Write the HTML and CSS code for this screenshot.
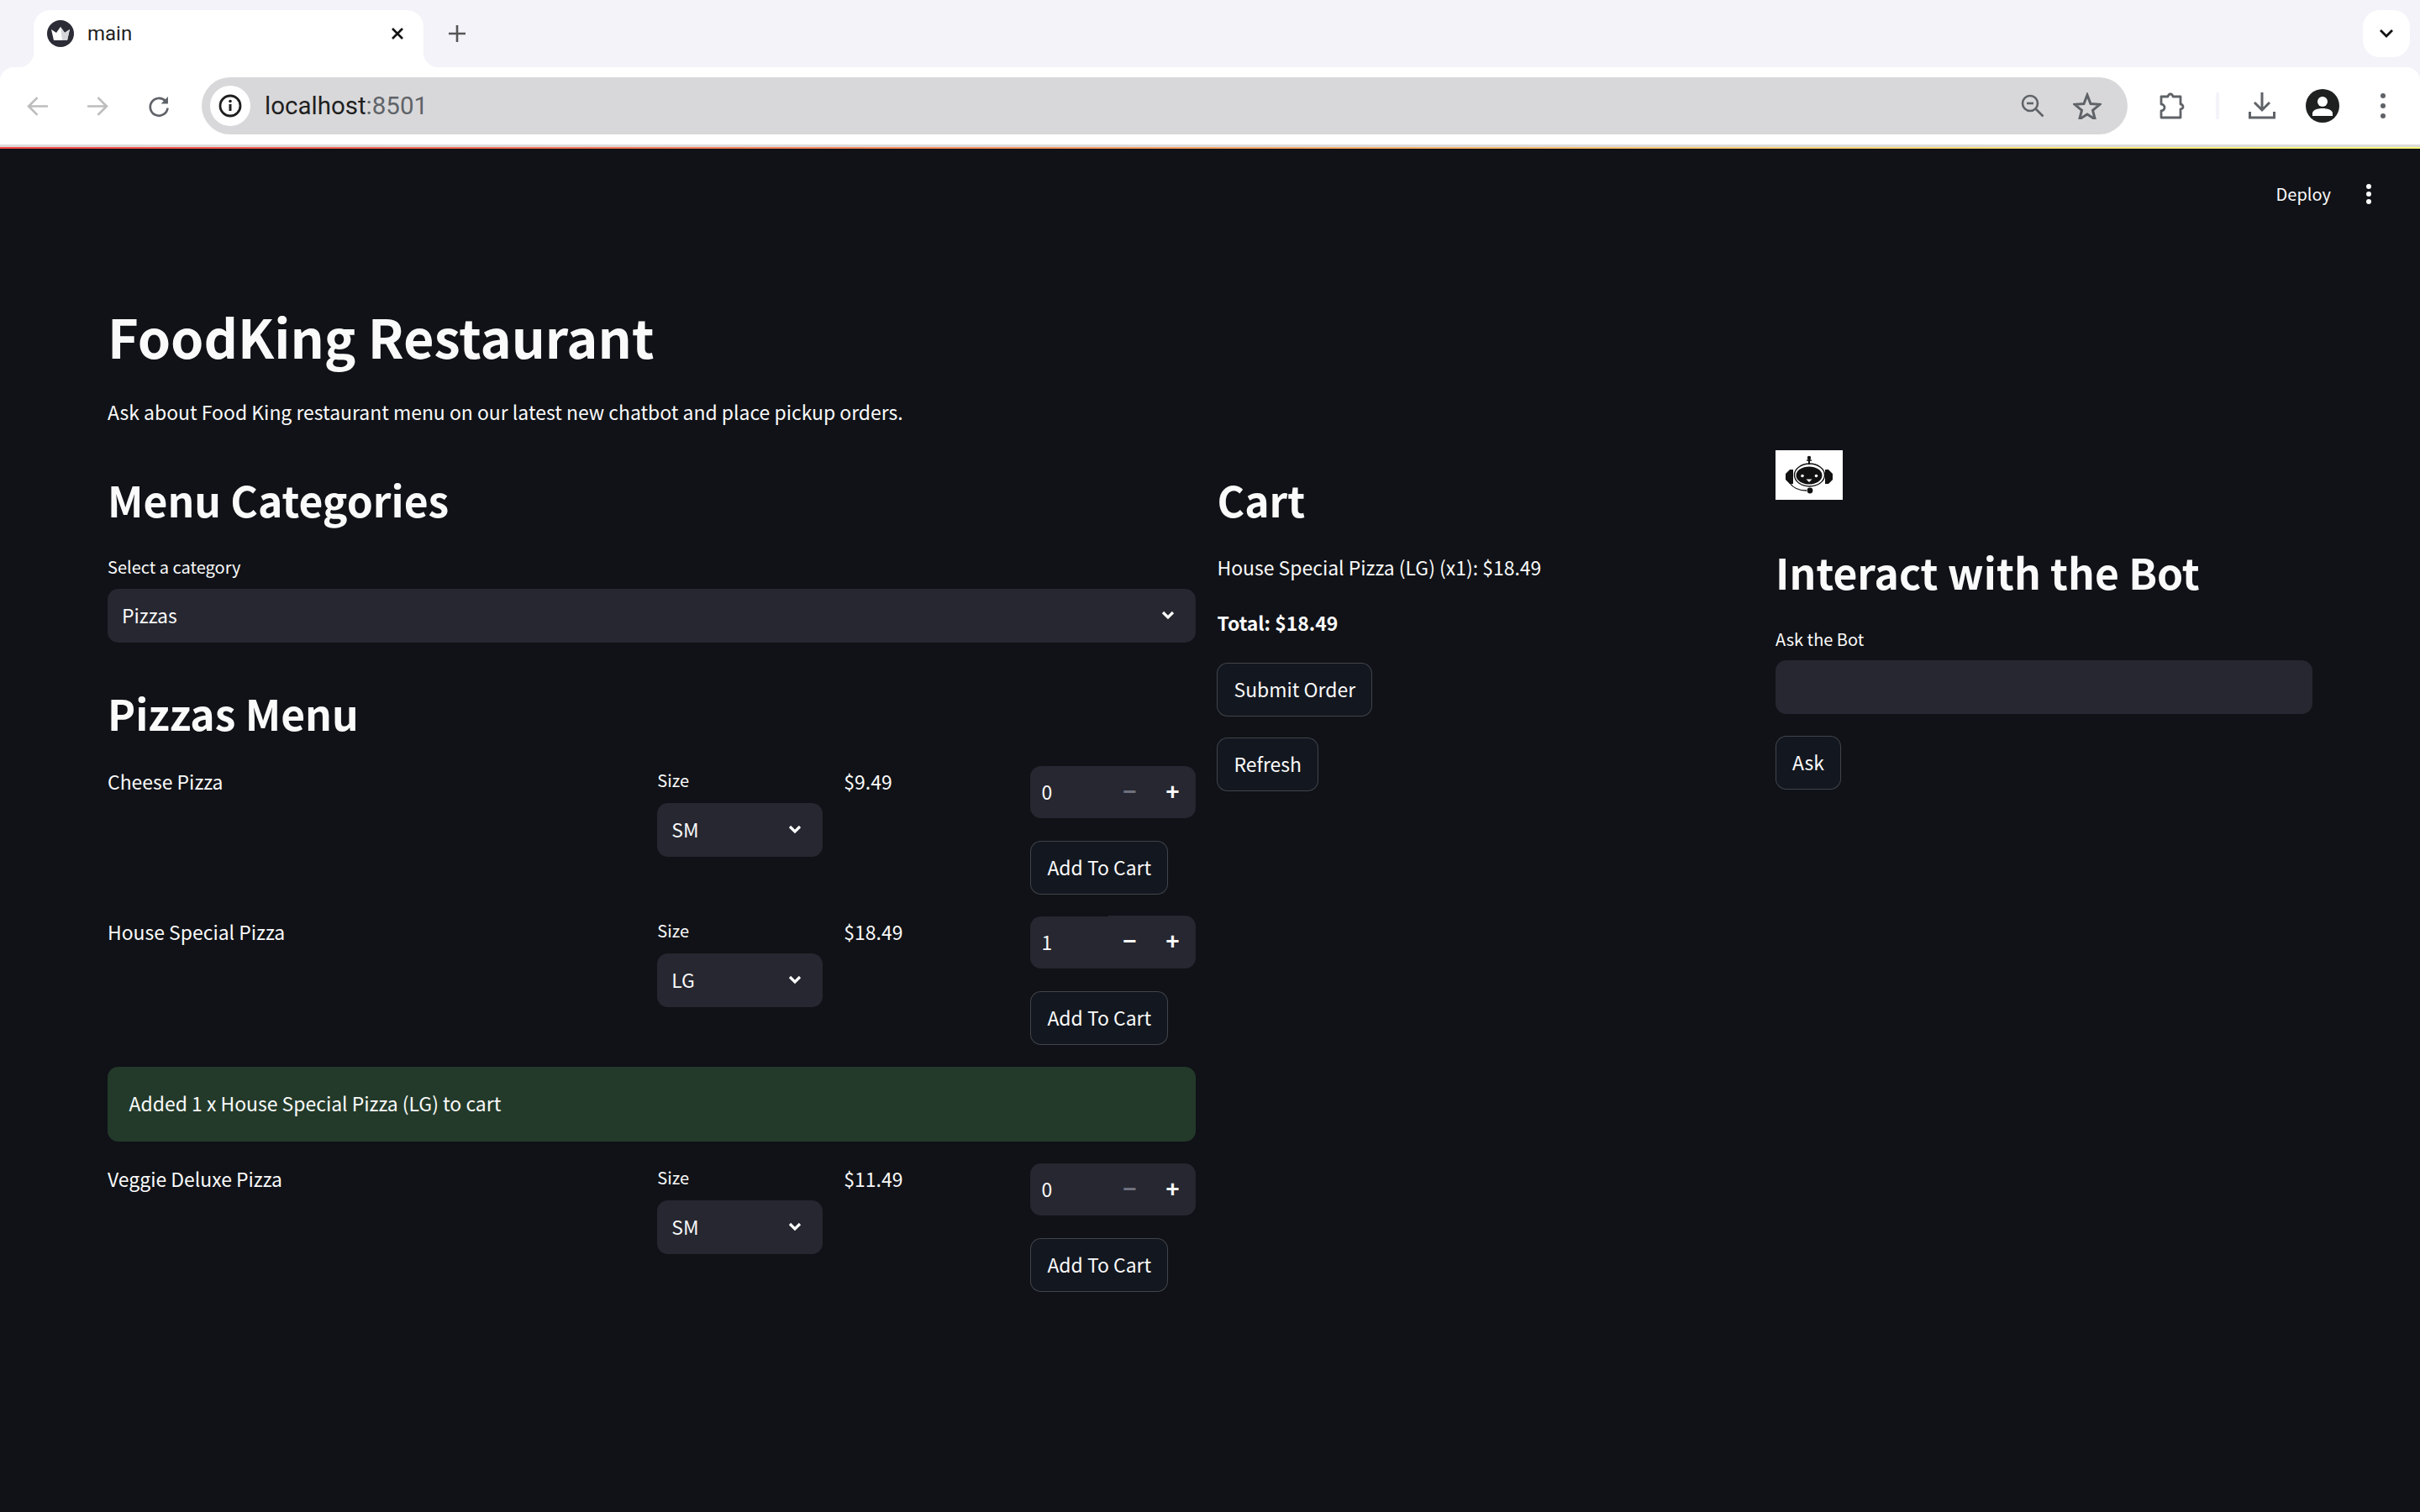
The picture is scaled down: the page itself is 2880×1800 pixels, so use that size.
FILE: index.html
```html
<!DOCTYPE html>
<html lang="en">
<head>
<meta charset="utf-8">
<title>main</title>
<link rel="stylesheet" href="styles.css">
</head>
<body>
<div class="chrome">
  <div class="tabstrip">
    <div class="tab">
      <svg class="favicon" viewBox="0 0 32 32"><circle cx="16" cy="16" r="16" fill="#2b2c36"/><path d="M5 11l6 4 5-7 5 7 6-4-3 13H8z" fill="#fff"/><path d="M16 8l5 7 6-4-3 13h-6z" fill="#d5d5da"/></svg>
      <span class="tab-title">main</span>
      <svg class="tab-close" viewBox="0 0 18 18"><path d="M3 3l12 12M15 3L3 15" stroke="#111" stroke-width="2.6" fill="none"/></svg>
    </div>
    <svg class="new-tab" viewBox="0 0 22 22"><path d="M11 1v20M1 11h20" stroke="#555" stroke-width="2.6" fill="none"/></svg>
    <div class="tab-search"><svg viewBox="0 0 18 12" width="18" height="12"><path d="M2 2l7 7 7-7" stroke="#111" stroke-width="2.8" fill="none"/></svg></div>
  </div>
  <div class="toolbar">
    <div class="tool tool-nav"><svg viewBox="0 0 26 26"><path d="M25 13H3M13 3L3 13l10 10" stroke="#bdbdbd" stroke-width="2.6" fill="none"/></svg></div>
    <div class="tool tool-nav"><svg viewBox="0 0 26 26"><path d="M1 13h22M13 3l10 10-10 10" stroke="#bdbdbd" stroke-width="2.6" fill="none"/></svg></div>
    <div class="tool tool-nav"><svg viewBox="0 0 26 26"><path d="M21 7a10 10 0 1 0 2.6 8" stroke="#5f6368" stroke-width="2.6" fill="none"/><path d="M24 2v8h-8z" fill="#5f6368"/></svg></div>
    <div class="omnibox">
      <div class="site-info"><svg viewBox="0 0 28 28" width="28" height="28"><circle cx="14" cy="14" r="12" stroke="#1f1f1f" stroke-width="2.8" fill="none"/><path d="M14 12v8" stroke="#1f1f1f" stroke-width="3"/><circle cx="14" cy="8.5" r="1.8" fill="#1f1f1f"/></svg></div>
      <span class="url">localhost<span class="url-port">:8501</span></span>
      <svg class="omni-icon" viewBox="0 0 28 28"><circle cx="11" cy="11" r="9" stroke="#5f6368" stroke-width="2.6" fill="none"/><path d="M7 11h8" stroke="#5f6368" stroke-width="2.6"/><path d="M17.500 17.500l9 9" stroke="#5f6368" stroke-width="2.6"/></svg>
      <svg class="omni-icon omni-star" viewBox="0 0 34 32"><path d="M17 3l4 10.500 11 .8-8.500 7 2.800 10.700L17 26l-9.300 6 2.800-10.700-8.500-7 11-.8z" stroke="#5f6368" stroke-width="3" fill="none" stroke-linejoin="miter"/></svg>
    </div>
    <div class="tools-right">
      <div class="tool"><svg viewBox="0 0 32 34"><path d="M3 6h8a3 3 0 0 1 6 0h9v9a3 3 0 0 1 0 6v10H3v-8a4 4 0 0 0 0-8z" stroke="#5f6368" stroke-width="2.800" fill="none" stroke-linejoin="round"/></svg></div>
      <div class="tool-divider"></div>
      <div class="tool"><svg viewBox="0 0 32 34"><path d="M16 1v20M7 13l9 9 9-9" stroke="#5f6368" stroke-width="3" fill="none"/><path d="M1.500 24v7h29v-7" stroke="#5f6368" stroke-width="3" fill="none"/></svg></div>
      <div class="tool"><svg class="avatar" viewBox="0 0 40 40"><circle cx="20" cy="20" r="20" fill="#1f2121"/><circle cx="20" cy="15" r="6" fill="#fff"/><path d="M8 32v-3c0-4 6-6 12-6s12 2 12 6v3z" fill="#fff"/></svg></div>
      <div class="tool"><svg viewBox="0 0 8 32" class="tool-dots"><circle cx="4" cy="4" r="3" fill="#5f6368"/><circle cx="4" cy="16" r="3" fill="#5f6368"/><circle cx="4" cy="28" r="3" fill="#5f6368"/></svg></div>
    </div>
  </div>
  <div class="decoration"></div>
</div>

<div class="app">
  <header class="app-header">
    <span class="deploy">Deploy</span>
    <svg class="app-menu" viewBox="0 0 8 26"><circle cx="4" cy="4" r="3" fill="#fafafa"/><circle cx="4" cy="13" r="3" fill="#fafafa"/><circle cx="4" cy="22" r="3" fill="#fafafa"/></svg>
  </header>

  <main class="main">
    <h1 class="title">FoodKing Restaurant</h1>
    <p class="intro">Ask about Food King restaurant menu on our latest new chatbot and place pickup orders.</p>

    <div class="columns">
      <section class="col-menu">
        <h2 class="heading">Menu Categories</h2>
        <div class="field-label category-label">Select a category</div>
        <div class="select category-select"><span>Pizzas</span><svg class="chevron" viewBox="0 0 16 11"><path d="M2 2l6 6 6-6" stroke="#fafafa" stroke-width="3.200" fill="none"/></svg></div>
        <h2 class="heading menu-heading">Pizzas Menu</h2>

        <div class="items">
          <div class="item">
            <div class="item-name">Cheese Pizza</div>
            <div>
              <div class="field-label size-label">Size</div>
              <div class="select size-select"><span>SM</span><svg class="chevron" viewBox="0 0 16 11"><path d="M2 2l6 6 6-6" stroke="#fafafa" stroke-width="3.200" fill="none"/></svg></div>
            </div>
            <div class="item-price">$9.49</div>
            <div>
              <div class="number">
                <span class="number-value">0</span>
                <div class="number-steps"><span class="step step-off">&minus;</span><span class="step">+</span></div>
              </div>
              <button class="btn add-btn">Add To Cart</button>
            </div>
          </div>

          <div class="item">
            <div class="item-name">House Special Pizza</div>
            <div>
              <div class="field-label size-label">Size</div>
              <div class="select size-select"><span>LG</span><svg class="chevron" viewBox="0 0 16 11"><path d="M2 2l6 6 6-6" stroke="#fafafa" stroke-width="3.200" fill="none"/></svg></div>
            </div>
            <div class="item-price">$18.49</div>
            <div>
              <div class="number">
                <span class="number-value">1</span>
                <div class="number-steps number-steps-raised"><span class="step">&minus;</span><span class="step">+</span></div>
              </div>
              <button class="btn add-btn">Add To Cart</button>
            </div>
          </div>

          <div class="alert">Added 1 x House Special Pizza (LG) to cart</div>

          <div class="item">
            <div class="item-name">Veggie Deluxe Pizza</div>
            <div>
              <div class="field-label size-label">Size</div>
              <div class="select size-select"><span>SM</span><svg class="chevron" viewBox="0 0 16 11"><path d="M2 2l6 6 6-6" stroke="#fafafa" stroke-width="3.200" fill="none"/></svg></div>
            </div>
            <div class="item-price">$11.49</div>
            <div>
              <div class="number">
                <span class="number-value">0</span>
                <div class="number-steps"><span class="step step-off">&minus;</span><span class="step">+</span></div>
              </div>
              <button class="btn add-btn">Add To Cart</button>
            </div>
          </div>
        </div>
      </section>

      <section class="col-cart">
        <h2 class="heading">Cart</h2>
        <p class="cart-line">House Special Pizza (LG) (x1): $18.49</p>
        <p class="cart-total">Total: $18.49</p>
        <button class="btn submit-btn">Submit Order</button>
        <button class="btn refresh-btn">Refresh</button>
      </section>

      <section class="col-bot">
        <svg class="bot-image" viewBox="0 0 80 59">
          <rect width="80" height="59" fill="#fff"/>
          <path d="M40 9v8" stroke="#111" stroke-width="2"/>
          <path d="M37 12h6" stroke="#111" stroke-width="1.500"/>
          <circle cx="40" cy="9" r="2.200" fill="#111"/>
          <ellipse cx="40.500" cy="29.500" rx="18" ry="13.500" stroke="#111" stroke-width="1.400" fill="none"/>
          <ellipse cx="40" cy="30" rx="15.500" ry="10.500" fill="#111"/>
          <path d="M21 23h-4l-5 5v7l5 5h4zM59 23h4l5 5v7l-5 5h-4z" fill="#111"/>
          <path d="M17 39c4 6 11 9 20 9" stroke="#111" stroke-width="1.300" fill="none"/>
          <circle cx="41" cy="48" r="3.400" fill="#111"/>
          <circle cx="32" cy="30.500" r="1.800" fill="#fff"/>
          <circle cx="48.500" cy="30.500" r="1.800" fill="#fff"/>
          <path d="M36.500 34.500h7l-3.500 3.500z" fill="#fff"/>
        </svg>
        <h2 class="heading bot-heading">Interact with the Bot</h2>
        <div class="field-label bot-label">Ask the Bot</div>
        <input class="bot-input" type="text">
        <button class="btn ask-btn">Ask</button>
      </section>
    </div>
  </main>
</div>
</body>
</html>
```

FILE: styles.css
```css
* {
  box-sizing: border-box;
}
html, body {
  margin: 0;
  height: 100%;
}
body {
  background: #101217;
  color: #fafafa;
  font-family: "Noto Sans CJK SC", "Source Sans Pro", "Noto Sans", sans-serif;
  font-size: 22.950px;
  overflow: hidden;
}

/* browser chrome */
.chrome {
  background: #f3f3f9;
  font-family: Roboto, "Liberation Sans", sans-serif;
}
.tabstrip {
  display: flex;
  align-items: center;
  height: 80px;
  padding: 12px 12px 0 40px;
}
.tab {
  position: relative;
  display: flex;
  align-items: center;
  width: 464px;
  height: 68px;
  padding: 0 22px 12px 16px;
  background: #fff;
  border-radius: 20px 20px 0 0;
}
.tab::before, .tab::after {
  content: "";
  position: absolute;
  bottom: 0;
  width: 18px;
  height: 18px;
}
.tab::before {
  left: -18px;
  background: radial-gradient(circle at 0 0, #f3f3f9 18px, #fff 18.500px);
}
.tab::after {
  right: -18px;
  background: radial-gradient(circle at 100% 0, #f3f3f9 18px, #fff 18.500px);
}
.favicon {
  width: 32px;
  height: 32px;
}
.tab-title {
  margin-left: 16px;
  font-size: 24px;
  color: #1f1f1f;
  flex: 1;
}
.tab-close {
  width: 18px;
  height: 18px;
}
.new-tab {
  width: 22px;
  height: 22px;
  margin: -12px 0 0 29px;
}
.tab-search {
  display: flex;
  align-items: center;
  justify-content: center;
  width: 56px;
  height: 56px;
  margin: -12px 0 0 auto;
  background: #fff;
  border-radius: 20px;
}
.toolbar {
  display: flex;
  align-items: center;
  height: 92px;
  padding: 0 8px;
  background: #fff;
  border-radius: 16px 16px 0 0;
}
.tool {
  display: flex;
  align-items: center;
  justify-content: center;
  width: 72px;
  height: 72px;
  flex: none;
}
.tool svg {
  width: 32px;
  height: 34px;
}
.tool-nav svg {
  width: 27px;
  height: 27px;
}
.tool svg.avatar {
  width: 40px;
  height: 40px;
}
.tool svg.tool-dots {
  width: 8px;
  height: 32px;
}
.omnibox {
  display: flex;
  align-items: center;
  width: 2292px;
  height: 68px;
  margin-left: 16px;
  padding: 0 31px 0 10px;
  background: #d8d8da;
  border-radius: 34px;
}
.site-info {
  display: flex;
  align-items: center;
  justify-content: center;
  width: 48px;
  height: 48px;
  background: #fff;
  border-radius: 50%;
}
.url {
  margin-left: 17px;
  font-size: 29.500px;
  color: #1f1f1f;
  flex: 1;
}
.url-port {
  color: #5f6368;
}
.omni-icon {
  width: 28px;
  height: 28px;
  margin-right: 34px;
}
.omni-star {
  width: 34px;
  height: 32px;
  margin-right: 0;
}
.tools-right {
  display: flex;
  align-items: center;
  margin-left: 17px;
}
.tool-divider {
  width: 4px;
  height: 32px;
  margin: 0 15px 0 16px;
  background: #f3f3f9;
  border-radius: 2px;
}
.decoration {
  height: 5px;
  border-top: 3px solid #dcdcdc;
  background: linear-gradient(90deg, #ff4b4b, #fffd80);
}

/* header */
.app-header {
  display: flex;
  align-items: center;
  justify-content: flex-end;
  height: 108px;
  padding-right: 57px;
}
.deploy {
  font-size: 20px;
  line-height: 32px;
}
.app-menu {
  width: 8px;
  height: 26px;
  margin-left: 41px;
}

/* page */
.main {
  padding: 0 128px;
}
.title {
  margin: 71px 0 0;
  font-size: 63px;
  font-weight: 700;
  line-height: 88px;
}
.intro {
  margin: 26px 0 0;
  line-height: 40px;
}
.columns {
  display: grid;
  grid-template-columns: 1295fr 639fr 639fr;
  column-gap: 25.600px;
  margin-top: 26px;
}
.heading {
  margin: 0;
  font-size: 49.800px;
  font-weight: 700;
  line-height: 71px;
}
.col-menu, .col-cart {
  padding-top: 23px;
}
.field-label {
  font-size: 20px;
  line-height: 32px;
}
.category-label {
  margin-top: 29px;
}
.select {
  display: flex;
  align-items: center;
  justify-content: space-between;
  height: 64px;
  padding: 0 17px 2px;
  background: #262730;
  border-radius: 12.800px;
}
.chevron {
  width: 16px;
  height: 11px;
  flex: none;
}
.category-select {
  margin-top: 10px;
}
.category-select, .size-select {
  padding-right: 25px;
}
.menu-heading {
  margin-top: 48px;
}

/* menu rows */
.items {
  display: flex;
  flex-direction: column;
  gap: 26px;
  margin-top: 28px;
}
.item {
  display: grid;
  grid-template-columns: 3.200fr 1fr 1fr 1fr;
  column-gap: 25.600px;
  height: 153px;
}
.item-name, .item-price {
  line-height: 37px;
}
.size-label {
  margin-top: 1px;
}
.size-select {
  margin-top: 11px;
}
.number {
  display: flex;
  align-items: stretch;
  height: 62px;
}
.number-value {
  flex: 1;
  padding-left: 13px;
  line-height: 60px;
  background: #262730;
  border-radius: 12.800px 0 0 12.800px;
}
.number-steps {
  display: flex;
  width: 104px;
  padding-right: 2px;
  background: #262730;
  border-radius: 0 12.800px 12.800px 0;
}
.number-steps-raised {
  margin-top: -1px;
}
.step {
  flex: 1;
  text-align: center;
  font-family: "Liberation Sans", sans-serif;
  font-size: 28px;
  font-weight: 700;
  line-height: 62px;
}
.step-off {
  color: #6f7180;
}
.btn {
  display: block;
  height: 64px;
  padding: 0 19px 2px;
  color: #fafafa;
  font: inherit;
  line-height: 58px;
  background: #13171f;
  border: 1.500px solid rgba(250, 250, 250, 0.2);
  border-radius: 12.800px;
}
.add-btn {
  margin-top: 27px;
}
.alert {
  height: 89px;
  padding: 0 25.600px;
  line-height: 87px;
  background: #233a2a;
  border-radius: 12.800px;
}

/* cart */
.cart-line {
  margin: 26px 0 0;
  line-height: 39px;
}
.cart-total {
  margin: 27px 0 0;
  font-weight: 700;
  line-height: 39px;
}
.submit-btn {
  margin-top: 28px;
}
.refresh-btn {
  margin-top: 25px;
}

/* bot */
.bot-image {
  display: block;
  width: 80px;
  height: 59px;
}
.bot-heading {
  margin-top: 50px;
}
.bot-label {
  margin-top: 29px;
}
.bot-input {
  display: block;
  width: 100%;
  height: 64px;
  margin-top: 9px;
  background: #262730;
  border: 0;
  border-radius: 12.800px;
}
.ask-btn {
  margin-top: 26px;
}
```
